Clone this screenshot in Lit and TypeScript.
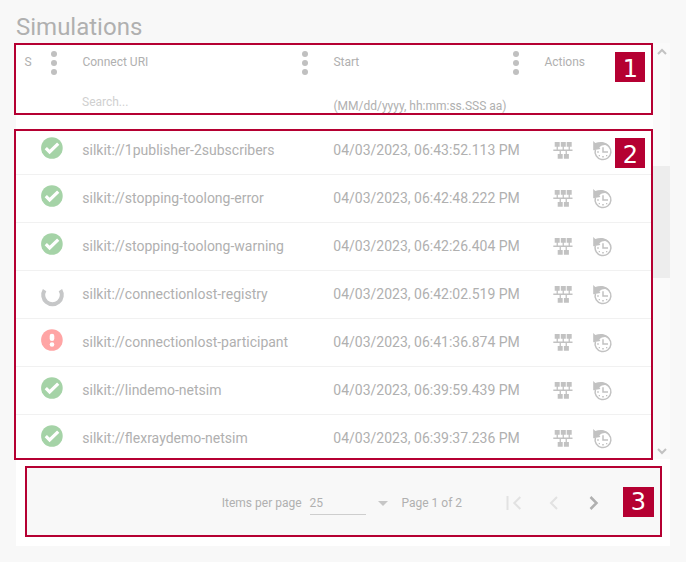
import { LitElement, html, css, svg } from "lit";
import { customElement, property } from "lit/decorators.js";

type Status = "ok" | "running" | "error";

interface Simulation {
  status: Status;
  uri: string;
  start: string;
}

const simulations: Simulation[] = [
  { status: "ok", uri: "silkit://1publisher-2subscribers", start: "04/03/2023, 06:43:52.113 PM" },
  { status: "ok", uri: "silkit://stopping-toolong-error", start: "04/03/2023, 06:42:48.222 PM" },
  { status: "ok", uri: "silkit://stopping-toolong-warning", start: "04/03/2023, 06:42:26.404 PM" },
  { status: "running", uri: "silkit://connectionlost-registry", start: "04/03/2023, 06:42:02.519 PM" },
  { status: "error", uri: "silkit://connectionlost-participant", start: "04/03/2023, 06:41:36.874 PM" },
  { status: "ok", uri: "silkit://lindemo-netsim", start: "04/03/2023, 06:39:59.439 PM" },
  { status: "ok", uri: "silkit://flexraydemo-netsim", start: "04/03/2023, 06:39:37.236 PM" },
];

@customElement("status-icon")
export class StatusIcon extends LitElement {
  @property() status: Status = "ok";

  static styles = css`
    :host { display: block; width: 24px; height: 24px; }
    .icon { display: block; overflow: visible; }
  `;

  render() {
    const shapes = {
      ok: svg`<circle cx="11.9" cy="12" r="10.8" fill="#a5d3a7"/>
        <path d="M5.8 12.2l3.8 3.8 8.6-8.4" fill="none" stroke="#fff" stroke-width="3.2"/>`,
      running: svg`<path d="M4.6 7.1A9.3 9.3 0 1 0 20.4 7.1" fill="none" stroke="#c6c7c8" stroke-width="4"/>`,
      error: svg`<circle cx="11.9" cy="12" r="10.8" fill="#ffa5a5"/>
        <path d="M12 8v2.7" stroke="#fff" stroke-width="4.6" stroke-linecap="round"/>
        <circle cx="12" cy="16.5" r="2.3" fill="#fff"/>`,
    };
    return html`<svg class="icon" width="24" height="24" viewBox="0 0 24 24">${shapes[this.status]}</svg>`;
  }
}

@customElement("app-root")
export class AppRoot extends LitElement {
  static styles = css`
    :host {
      display: block;
      position: relative;
      width: 686px;
      height: 562px;
      overflow: hidden;
      background: #f8f8f8;
      color: #b0b0b0;
      font: 14px/20px Roboto, sans-serif;
    }
    * { box-sizing: border-box; }
    svg { display: block; }
    .title {
      margin: 0;
      height: 43px;
      padding: 11px 0 0 16px;
      font-size: 24px;
      line-height: 32px;
      font-weight: 400;
    }
    .panel { width: 654px; height: 503px; margin-left: 16px; background: #fff; }
    .viewport { display: flex; height: 416px; }
    .table { width: 637px; height: 416px; overflow: hidden; }
    .columns { display: grid; grid-template-columns: 58px 251px 211px 117px; }
    .header { height: 84px; font-size: 12px; line-height: 16px; }
    .head { display: flex; flex-direction: column; padding: 11px 17px 0 8.4px; }
    .caption { display: flex; justify-content: space-between; height: 32px; }
    .dots { margin-top: -4px; }
    .search { padding-top: 8px; margin-left: -0.4px; color: #d0d0d0; }
    .format { padding-top: 12px; white-space: nowrap; }
    .row { height: 48px; border-bottom: 1px solid #f1f1f1; }
    .cell { padding: 13px 0 0 8.3px; white-space: nowrap; }
    .status { padding: 9px 0 0 24px; }
    .status.running { padding-top: 12px; }
    .actions { display: flex; gap: 19px; padding: 14px 0 0 17px; }
    .scrollbar {
      display: flex;
      flex-direction: column;
      align-items: center;
      justify-content: space-between;
      width: 17px;
      padding: 5px 0 4px;
      background: #fafafa;
      position: relative;
    }
    .thumb { position: absolute; left: 0; top: 123px; width: 17px; height: 112px; background: #ededed; }
    .pager {
      display: flex;
      align-items: center;
      width: 637px;
      height: 71px;
      margin: 7px 0 0 9px;
      padding: 2px 0 0 196.8px;
      background: #f8f8f8;
      font-size: 12px;
    }
    .size { width: 56px; height: 25px; margin-left: 8.4px; padding-top: 3px; border-bottom: 1px solid #cecece; text-indent: -0.5px; }
    .caret { margin: 1px 13.5px 0 12px; }
    .first { margin-left: 44px; }
    .prev { margin-left: 27px; }
    .next { margin-left: 31px; }
    .frame { position: absolute; border: 2px solid #b50032; }
    .frame-header { left: 14px; top: 43px; width: 639px; height: 72px; }
    .frame-rows { left: 14px; top: 129px; width: 639px; height: 331px; }
    .frame-pager { left: 25px; top: 466px; width: 637px; height: 71px; }
    .badge {
      position: absolute;
      right: 6px;
      top: 7px;
      width: 30px;
      height: 30px;
      padding-left: 1px;
      background: #b50032;
      color: #fff;
      font: 24px/34px "DejaVu Sans", sans-serif;
      text-align: center;
    }
    .frame-pager .badge { top: 19px; width: 31px; line-height: 31px; padding-left: 0; }
  `;

  private dots() {
    return html`<svg class="dots" width="6" height="26" viewBox="0 0 6 26" fill="#c0c0c0">
      <circle cx="3" cy="4" r="3"/><circle cx="3" cy="13" r="3"/><circle cx="3" cy="22" r="3"/>
    </svg>`;
  }

  private networkIcon() {
    return html`<svg width="20" height="20" viewBox="0.3 0 20 20" fill="#c2c2c2">
      <path d="M2 1h5v4.7H2zM8.1 1h5v4.7h-5zM14 1h5v4.7h-5zM5 13h5v4.7H5zM11.2 13h5v4.7h-5zM.6 8.6h19.2V10H.6zM3.9 5h1.3v4H3.9zM9.9 5h1.3v4H9.9zM15.9 5h1.3v4h-1.3zM6.9 9h1.3v4H6.9zM12.9 9h1.3v4h-1.3z"/>
    </svg>`;
  }

  private historyIcon() {
    return html`<svg width="20" height="20" viewBox="0 0 20 20">
      <path d="M3.4 8.5A7.9 7.9 0 1 0 11 2.8" fill="none" stroke="#c2c2c2" stroke-width="1.5"/>
      <path d="M1.2 0l2.1 2C8 .2 15 .2 18.2 6.2 15 3.4 10.4 3.4 7.4 6.4L8.4 8 1.2 9.2z" fill="#c2c2c2"/>
      <path d="M11 6.2v4.8h5" fill="none" stroke="#c2c2c2" stroke-width="1.5"/>
      <path d="M5.2 10.2h1.6v1.5H5.2zM6.7 14h1.3v1.3H6.7zM10.2 15h1.6v1.6h-1.6zM14 14h1.3v1.3H14z" fill="#c2c2c2"/>
    </svg>`;
  }

  render() {
    return html`
      <h1 class="title">Simulations</h1>
      <main class="panel">
        <div class="viewport">
          <div class="table">
            <div class="columns header">
              <div class="head"><div class="caption">S ${this.dots()}</div></div>
              <div class="head">
                <div class="caption">Connect URI ${this.dots()}</div>
                <div class="search">Search...</div>
              </div>
              <div class="head">
                <div class="caption">Start ${this.dots()}</div>
                <div class="format">(MM/dd/yyyy, hh:mm:ss.SSS aa)</div>
              </div>
              <div class="head"><div class="caption">Actions</div></div>
            </div>
            ${simulations.map(
              (s) => html`<div class="columns row">
                <div class="status ${s.status}"><status-icon .status=${s.status}></status-icon></div>
                <div class="cell">${s.uri}</div>
                <div class="cell">${s.start}</div>
                <div class="actions">${this.networkIcon()}${this.historyIcon()}</div>
              </div>`
            )}
          </div>
          <div class="scrollbar">
            <svg width="10" height="7" viewBox="0 0 10 7" fill="none" stroke="#c2c2c2" stroke-width="2"><path d="M1 6l4-4 4 4"/></svg>
            <div class="thumb"></div>
            <svg width="10" height="7" viewBox="0 0 10 7" fill="none" stroke="#c2c2c2" stroke-width="2"><path d="M1 1l4 4 4-4"/></svg>
          </div>
        </div>
        <div class="pager">
          <span>Items per page</span>
          <span class="size">25</span>
          <svg class="caret" width="10" height="5" viewBox="0 0 10 5"><path d="M0 0h10L5 5z" fill="#c6c6c6"/></svg>
          <span>Page 1 of 2</span>
          <svg class="first" width="16" height="14" viewBox="0 0 16 14" fill="none" stroke="#e2e2e2" stroke-width="2"><path d="M1.5 0v14M14.3 1L8.3 7l6 6"/></svg>
          <svg class="prev" width="9" height="14" viewBox="0 0 9 14" fill="none" stroke="#e2e2e2" stroke-width="2"><path d="M8 1L2 7l6 6"/></svg>
          <svg class="next" width="10" height="14" viewBox="0 0 10 14" fill="none" stroke="#b0b0b0" stroke-width="2.5"><path d="M1.5 1l6 6-6 6"/></svg>
        </div>
      </main>
      <div class="frame frame-header"><span class="badge">1</span></div>
      <div class="frame frame-rows"><span class="badge">2</span></div>
      <div class="frame frame-pager"><span class="badge">3</span></div>
    `;
  }
}
